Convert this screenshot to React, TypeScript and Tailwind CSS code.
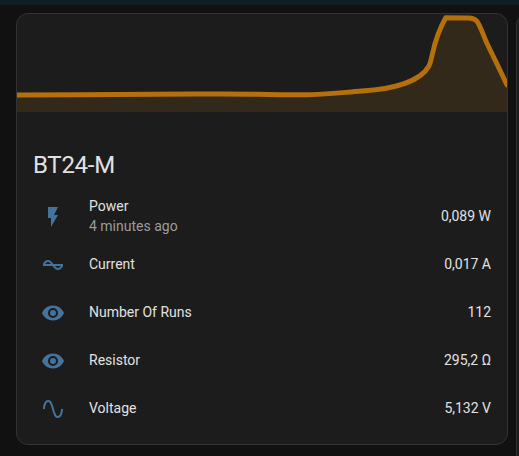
const FLASH = 'M7,2V13H10V22L17,10H13L17,2H7Z';
const CURRENT_AC =
  'M12.43 11C12.28 10.84 10 7 7 7S2.32 10.18 2 11V13H11.57C11.72 13.16 14 17 17 17S21.68 13.82 22 13V11H12.43M7 9C8.17 9 9.18 9.85 10 11H4.31C4.78 10.17 5.54 9 7 9M17 15C15.83 15 14.82 14.15 14 13H19.69C19.22 13.83 18.46 15 17 15Z';
const EYE =
  'M12,9A3,3 0 0,0 9,12A3,3 0 0,0 12,15A3,3 0 0,0 15,12A3,3 0 0,0 12,9M12,17A5,5 0 0,1 7,12A5,5 0 0,1 12,7A5,5 0 0,1 17,12A5,5 0 0,1 12,17M12,4.5C7,4.5 2.73,7.61 1,12C2.73,16.39 7,19.5 12,19.5C17,19.5 21.27,16.39 23,12C21.27,7.61 17,4.5 12,4.5Z';
const SINE_WAVE =
  'M16.5,21C13.5,21 12.31,16.76 11.05,12.28C10.14,9.04 9,5 7.5,5C4.11,5 4,11.93 4,12H2C2,11.63 2.06,3 7.5,3C10.5,3 11.71,7.25 12.97,11.74C13.83,14.8 15,19 16.5,19C19.94,19 20.03,12.07 20.03,12H22.03C22.03,12.37 21.97,21 16.5,21Z';

interface Entity {
  name: string;
  value: string;
  icon: string;
  secondary?: string;
}

const entities: Entity[] = [
  { name: 'Power', value: '0,089 W', icon: FLASH, secondary: '4 minutes ago' },
  { name: 'Current', value: '0,017 A', icon: CURRENT_AC },
  { name: 'Number Of Runs', value: '112', icon: EYE },
  { name: 'Resistor', value: '295,2 Ω', icon: EYE },
  { name: 'Voltage', value: '5,132 V', icon: SINE_WAVE },
];

const LINE =
  'M0,81 L60,80.8 C120,80.5 160,80 205,80 C240,80 262,80.8 288,80.8 C306,80.6 324,78.6 345,77 C375,75.2 403,68 412,52 C416,44 415,28 428.7,3.7 L452,4 C461,4.2 461,8 470,29.5 L480,50 L490,71';

function HistoryGraph() {
  return (
    <svg className="block h-[98px] w-full" viewBox="0 0 490 98" fill="none">
      <path d={`${LINE} V98 H0 Z`} fill="#33291a" />
      <path d={LINE} stroke="#b4700c" strokeWidth="4.9" strokeLinejoin="round" strokeLinecap="round" />
    </svg>
  );
}

function EntityRow({ name, value, icon, secondary }: Entity) {
  return (
    <div className="flex h-10 items-center">
      <div className="flex size-10 shrink-0 items-center justify-center text-[#44739e]">
        <svg className="size-6" viewBox="0 0 24 24" fill="currentColor">
          <path d={icon} />
        </svg>
      </div>
      <div className="ml-4 flex-1 pb-0.5">
        <div>{name}</div>
        {secondary && <div className="text-[#9b9b9b]">{secondary}</div>}
      </div>
      <div className="pb-0.5 text-right">{value}</div>
    </div>
  );
}

export default function App() {
  return (
    <div className="flex h-[456px] w-[519px] flex-col overflow-hidden bg-[#111111] font-[Roboto,sans-serif] text-sm leading-5 text-[#e1e1e1]">
      <div className="h-[5px] shrink-0 bg-[#101e24]" />
      <div className="flex flex-1 gap-2 pl-4 pt-2">
        <section className="h-[432px] w-[492px] shrink-0 overflow-hidden rounded-xl border border-[#333333] bg-[#1c1c1c]">
          <HistoryGraph />
          <h1 className="mt-[33px] px-4 text-2xl leading-10 tracking-[-0.012em]">BT24-M</h1>
          <div className="mt-3 flex flex-col gap-2 px-4">
            {entities.map((entity) => (
              <EntityRow key={entity.name} {...entity} />
            ))}
          </div>
        </section>
        <section className="h-[480px] w-[492px] shrink-0 rounded-xl border border-[#333333] bg-[#1c1c1c]" />
      </div>
    </div>
  );
}
